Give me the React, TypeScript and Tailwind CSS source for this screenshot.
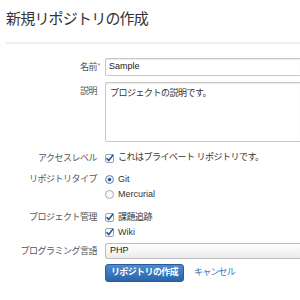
const font = "font-['Liberation_Sans','Noto_Sans_CJK_JP',sans-serif]";

const Check = () => (
    <svg width="9" height="9" viewBox="0 0 9 9" className="shrink-0">
        <rect x="0.5" y="0.5" width="8" height="8" rx="1.5" fill="#fff" stroke="#9aa3ad" />
        <path d="M2 4.6 L3.8 6.6 L7.8 1.2" fill="none" stroke="#2a5d9e" strokeWidth="1.6" strokeLinecap="round" strokeLinejoin="round" />
    </svg>
);

const Radio = ({ on }: { on?: boolean }) => (
    <svg width="9" height="9" viewBox="0 0 9 9" className="shrink-0">
        <circle cx="4.5" cy="4.5" r="4" fill={on ? "#e3ecf6" : "#fafafa"} stroke={on ? "#5c88bd" : "#a8a8a8"} />
        {on && <circle cx="4.5" cy="4.5" r="1.6" fill="#1f3f66" />}
    </svg>
);

const Label = ({ children }: { children: React.ReactNode }) => (
    <div className="w-[91px] shrink-0 text-right text-[9px] tracking-[-0.5px] text-[#555] leading-[14px]">{children}</div>
);

const App = () => {
    return (
        <div className={`w-[300px] h-[300px] overflow-hidden bg-white pl-[6px] ${font}`}>
            {/* page title */}
            <h1 className="pt-[9px] text-[15px] leading-[20px] tracking-[-0.8px] text-[#333]">新規リポジトリの作成</h1>
            <div className="mt-[13px] h-[2px] bg-[#eeeeee]" />

            {/* name */}
            <div className="mt-[14px] flex items-center gap-[8px]">
                <Label>
                    <span className="relative">名前<span className="absolute -right-[3px] -top-[3px] text-[7px] text-[#d9534f]">*</span></span>
                </Label>
                <div className="h-[18px] flex-1 flex items-center rounded-l-[2px] border border-r-0 border-[#c8c8c8] shadow-[inset_0_1px_1px_rgba(0,0,0,0.08)] pl-[3px] text-[9px] text-[#222]">Sample</div>
            </div>

            {/* description */}
            <div className="mt-[6px] flex gap-[8px]">
                <div className="pt-[2px]"><Label>説明</Label></div>
                <div className="h-[60px] flex-1 rounded-l-[2px] border border-r-0 border-[#c8c8c8] shadow-[inset_0_1px_1px_rgba(0,0,0,0.08)] pl-[4px] pt-[3px] text-[9px] leading-[14px] tracking-[-0.5px] text-[#333]">プロジェクトの説明です。</div>
            </div>

            {/* access level */}
            <div className="mt-[9px] flex gap-[8px]">
                <Label>アクセスレベル</Label>
                <div className="flex items-center gap-[4px] h-[14px] text-[9px] tracking-[-0.5px] text-[#333]">
                    <Check />
                    <span>これはプライベート リポジトリです。</span>
                </div>
            </div>

            {/* repository type */}
            <div className="mt-[7px] flex gap-[8px]">
                <Label><span className="leading-[15px]">リポジトリタイプ</span></Label>
                <div className="flex flex-col text-[9px] text-[#333]">
                    <div className="flex items-center gap-[4px] h-[15px]"><Radio on /><span>Git</span></div>
                    <div className="flex items-center gap-[4px] h-[15px]"><Radio /><span>Mercurial</span></div>
                </div>
            </div>

            {/* project management */}
            <div className="mt-[8px] flex gap-[8px]">
                <Label><span className="leading-[15px]">プロジェクト管理</span></Label>
                <div className="flex flex-col text-[9px] text-[#333]">
                    <div className="flex items-center gap-[4px] h-[15px]"><Check /><span className="tracking-[-0.5px]">課題追跡</span></div>
                    <div className="flex items-center gap-[4px] h-[15px]"><Check /><span>Wiki</span></div>
                </div>
            </div>

            {/* language */}
            <div className="mt-[3px] flex items-center gap-[8px]">
                <Label>プログラミング言語</Label>
                <div className="h-[16px] flex-1 flex items-center rounded-l-[3px] border border-r-0 border-[#bdbdbd] bg-gradient-to-b from-white to-[#ececec] pl-[4px] text-[9px] text-[#222]">PHP</div>
            </div>

            {/* actions */}
            <div className="mt-[5px] flex items-center gap-[10px] pl-[99px]">
                <button className="h-[18px] w-[79px] rounded-[3px] border border-[#2b5b98] bg-gradient-to-b from-[#4b8cd1] to-[#2b64a9] text-[9px] font-bold tracking-[-0.6px] text-white">リポジトリの作成</button>
                <span className="text-[9px] tracking-[-0.8px] text-[#3a74b6]">キャンセル</span>
            </div>
        </div>
    );
};

export default App;
